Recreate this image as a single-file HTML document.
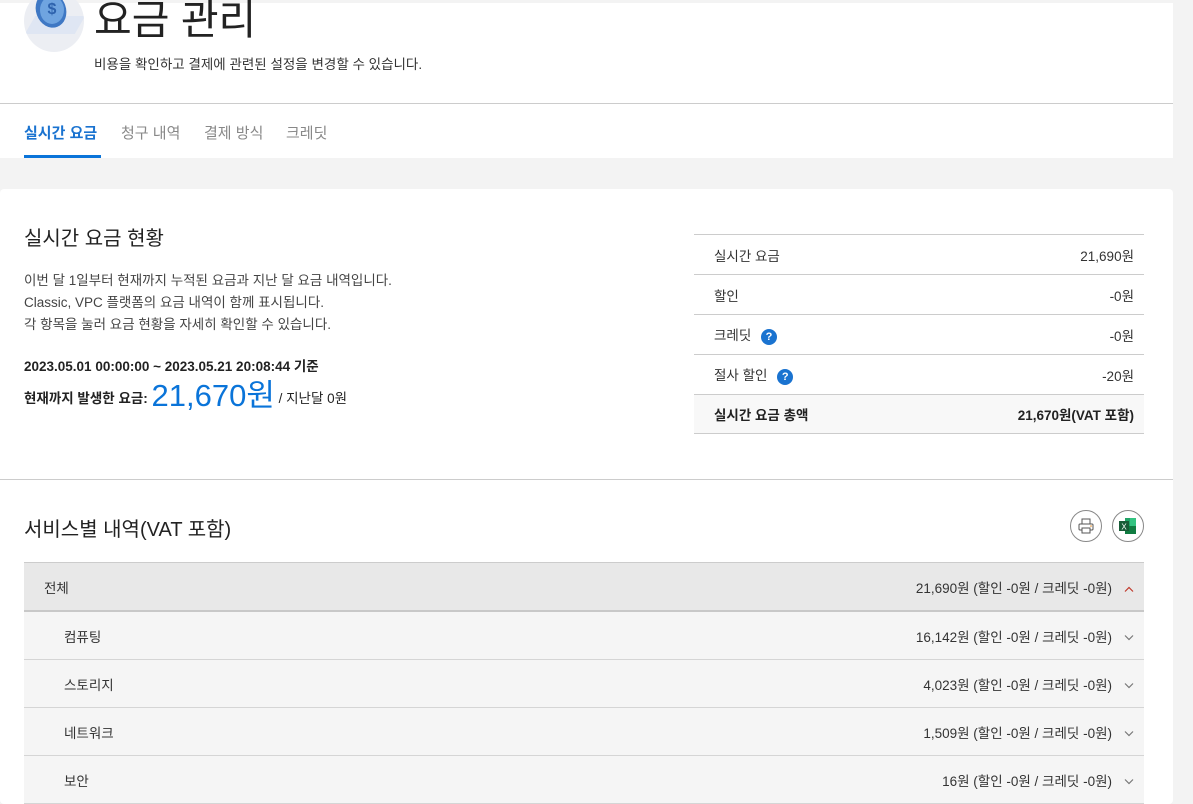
<!DOCTYPE html>
<html><head><meta charset="utf-8">
<style>
*{margin:0;padding:0;box-sizing:border-box}
body{width:1193px;height:804px;overflow:hidden;background:#f3f3f3;font-family:"Liberation Sans","Noto Sans CJK KR",sans-serif;color:#222;position:relative}
.a{position:absolute}
.w{background:#fff}
.ch{display:inline-block;margin-left:12px;vertical-align:middle}
</style></head><body>
<div class="a w" style="left:0;top:3px;width:1173px;height:155px"></div>
<div class="a" style="left:24px;top:-10px;width:60px;height:62px;border-radius:50%;background:#eceef3;overflow:hidden">
 <div class="a" style="left:6px;top:26px;width:50px;height:18px;background:#dfe6f3;transform:skewX(-30deg)"></div>
 <div class="a" style="left:12px;top:2px;width:30px;height:36px;border-radius:50%;background:#3f78c4;transform:rotate(-20deg)"></div>
 <div class="a" style="left:16px;top:6px;width:24px;height:28px;border-radius:50%;background:#6fa4e0;color:#2d62ad;font-size:16px;font-weight:bold;text-align:center;line-height:28px">$</div>
</div>
<div class="a" style="left:94px;top:-6px;font-size:41px;color:#222;line-height:52px">요금 관리</div>
<div class="a" style="left:94px;top:53px;font-size:13.5px;color:#333">비용을 확인하고 결제에 관련된 설정을 변경할 수 있습니다.</div>
<div class="a" style="left:0;top:103px;width:1173px;height:1px;background:#ccc"></div>
<div class="a" style="left:24px;top:122px;font-size:15px;font-weight:bold;color:#1a73d0">실시간 요금</div>
<div class="a" style="left:24px;top:155px;width:77px;height:3px;background:#0a74d9"></div>
<div class="a" style="left:121px;top:122px;font-size:15px;color:#888">청구 내역</div>
<div class="a" style="left:204px;top:122px;font-size:15px;color:#888">결제 방식</div>
<div class="a" style="left:286px;top:122px;font-size:15px;color:#888">크레딧</div>

<div class="a w" style="left:0;top:189px;width:1173px;height:615px;border-radius:4px"></div>
<div class="a" style="left:24px;top:222px;font-size:20px;color:#222">실시간 요금 현황</div>
<div class="a" style="left:24px;top:270px;font-size:13.5px;line-height:22px;color:#444">이번 달 1일부터 현재까지 누적된 요금과 지난 달 요금 내역입니다.<br>Classic, VPC 플랫폼의 요금 내역이 함께 표시됩니다.<br>각 항목을 눌러 요금 현황을 자세히 확인할 수 있습니다.</div>
<div class="a" style="left:24px;top:355px;font-size:13.5px;font-weight:bold;color:#222">2023.05.01 00:00:00 ~ 2023.05.21 20:08:44 기준</div>
<div class="a" style="left:24px;top:376px;font-size:13.5px;font-weight:bold;color:#222;white-space:nowrap;line-height:40px">현재까지 발생한 요금: <span style="font-size:31px;font-weight:normal;color:#0a74d9;vertical-align:-3px">21,670원</span> <span style="font-weight:normal">/ 지난달 0원</span></div>

<div class="a" style="left:694px;top:234px;width:450px;border-top:1px solid #ccc;font-size:13.5px;color:#333">
 <div style="height:40px;border-bottom:1px solid #ccc;display:flex;justify-content:space-between;align-items:center;padding:0 10px 0 20px"><span>실시간 요금</span><span>21,690원</span></div>
 <div style="height:40px;border-bottom:1px solid #ccc;display:flex;justify-content:space-between;align-items:center;padding:0 10px 0 20px"><span>할인</span><span>-0원</span></div>
 <div style="height:40px;border-bottom:1px solid #ccc;display:flex;justify-content:space-between;align-items:center;padding:0 10px 0 20px"><span>크레딧 <b style="display:inline-block;width:16px;height:16px;border-radius:50%;background:#1a73d0;color:#fff;font-size:11px;text-align:center;line-height:16px;margin-left:6px">?</b></span><span>-0원</span></div>
 <div style="height:40px;border-bottom:1px solid #ccc;display:flex;justify-content:space-between;align-items:center;padding:0 10px 0 20px"><span>절사 할인 <b style="display:inline-block;width:16px;height:16px;border-radius:50%;background:#1a73d0;color:#fff;font-size:11px;text-align:center;line-height:16px;margin-left:6px">?</b></span><span>-20원</span></div>
 <div style="height:39px;border-bottom:1px solid #ccc;background:#f8f8f8;display:flex;justify-content:space-between;align-items:center;padding:0 10px 0 20px;font-weight:bold;color:#222"><span>실시간 요금 총액</span><span>21,670원(VAT 포함)</span></div>
</div>

<div class="a" style="left:0;top:479px;width:1173px;height:1px;background:#ccc"></div>
<div class="a" style="left:24px;top:513px;font-size:20px;color:#222">서비스별 내역(VAT 포함)</div>
<div class="a" style="left:1070px;top:510px;width:32px;height:32px;border:1px solid #888;border-radius:50%">
 <svg width="30" height="30" viewBox="0 0 30 30"><rect x="11" y="8" width="8" height="5" fill="none" stroke="#555"/><rect x="8" y="13" width="14" height="6" rx="1" fill="none" stroke="#555"/><rect x="11" y="17" width="8" height="5" fill="#fff" stroke="#555"/><circle cx="20" cy="15" r="0.8" fill="#e58a1f"/></svg>
</div>
<div class="a" style="left:1112px;top:510px;width:32px;height:32px;border:1px solid #888;border-radius:50%">
 <svg width="30" height="30" viewBox="0 0 30 30"><rect x="12" y="7" width="11" height="16" fill="#21a366"/><rect x="17" y="7" width="6" height="8" fill="#33c481"/><rect x="12" y="15" width="11" height="8" fill="#107c41"/><rect x="6" y="10" width="10" height="10" fill="#185c37"/><text x="11" y="18.5" font-size="8" fill="#fff" text-anchor="middle" font-family="Liberation Sans">X</text></svg>
</div>

<div class="a" style="left:24px;top:562px;width:1120px;font-size:13.5px;color:#333">
 <div style="height:50px;background:#e8e8e8;border-top:1px solid #ccc;border-bottom:2px solid #c8c8c8;display:flex;justify-content:space-between;align-items:center;padding:0 10px 0 20px"><span>전체</span><span>21,690원 (할인 -0원 / 크레딧 -0원)<svg class="ch" width="10" height="6" viewBox="0 0 10 6"><path d="M1 5.5 L5 1.5 L9 5.5" fill="none" stroke="#c0392b" stroke-width="1.2"/></svg></span></div>
 <div style="height:48px;background:#f5f5f5;border-bottom:1px solid #d5d5d5;display:flex;justify-content:space-between;align-items:center;padding:0 10px 0 40px"><span>컴퓨팅</span><span>16,142원 (할인 -0원 / 크레딧 -0원)<svg class="ch" width="10" height="6" viewBox="0 0 10 6"><path d="M1 0.5 L5 4.5 L9 0.5" fill="none" stroke="#777" stroke-width="1.2"/></svg></span></div>
 <div style="height:48px;background:#f5f5f5;border-bottom:1px solid #d5d5d5;display:flex;justify-content:space-between;align-items:center;padding:0 10px 0 40px"><span>스토리지</span><span>4,023원 (할인 -0원 / 크레딧 -0원)<svg class="ch" width="10" height="6" viewBox="0 0 10 6"><path d="M1 0.5 L5 4.5 L9 0.5" fill="none" stroke="#777" stroke-width="1.2"/></svg></span></div>
 <div style="height:48px;background:#f5f5f5;border-bottom:1px solid #d5d5d5;display:flex;justify-content:space-between;align-items:center;padding:0 10px 0 40px"><span>네트워크</span><span>1,509원 (할인 -0원 / 크레딧 -0원)<svg class="ch" width="10" height="6" viewBox="0 0 10 6"><path d="M1 0.5 L5 4.5 L9 0.5" fill="none" stroke="#777" stroke-width="1.2"/></svg></span></div>
 <div style="height:48px;background:#f5f5f5;border-bottom:1px solid #d5d5d5;display:flex;justify-content:space-between;align-items:center;padding:0 10px 0 40px"><span>보안</span><span>16원 (할인 -0원 / 크레딧 -0원)<svg class="ch" width="10" height="6" viewBox="0 0 10 6"><path d="M1 0.5 L5 4.5 L9 0.5" fill="none" stroke="#777" stroke-width="1.2"/></svg></span></div>
</div>
</body></html>
